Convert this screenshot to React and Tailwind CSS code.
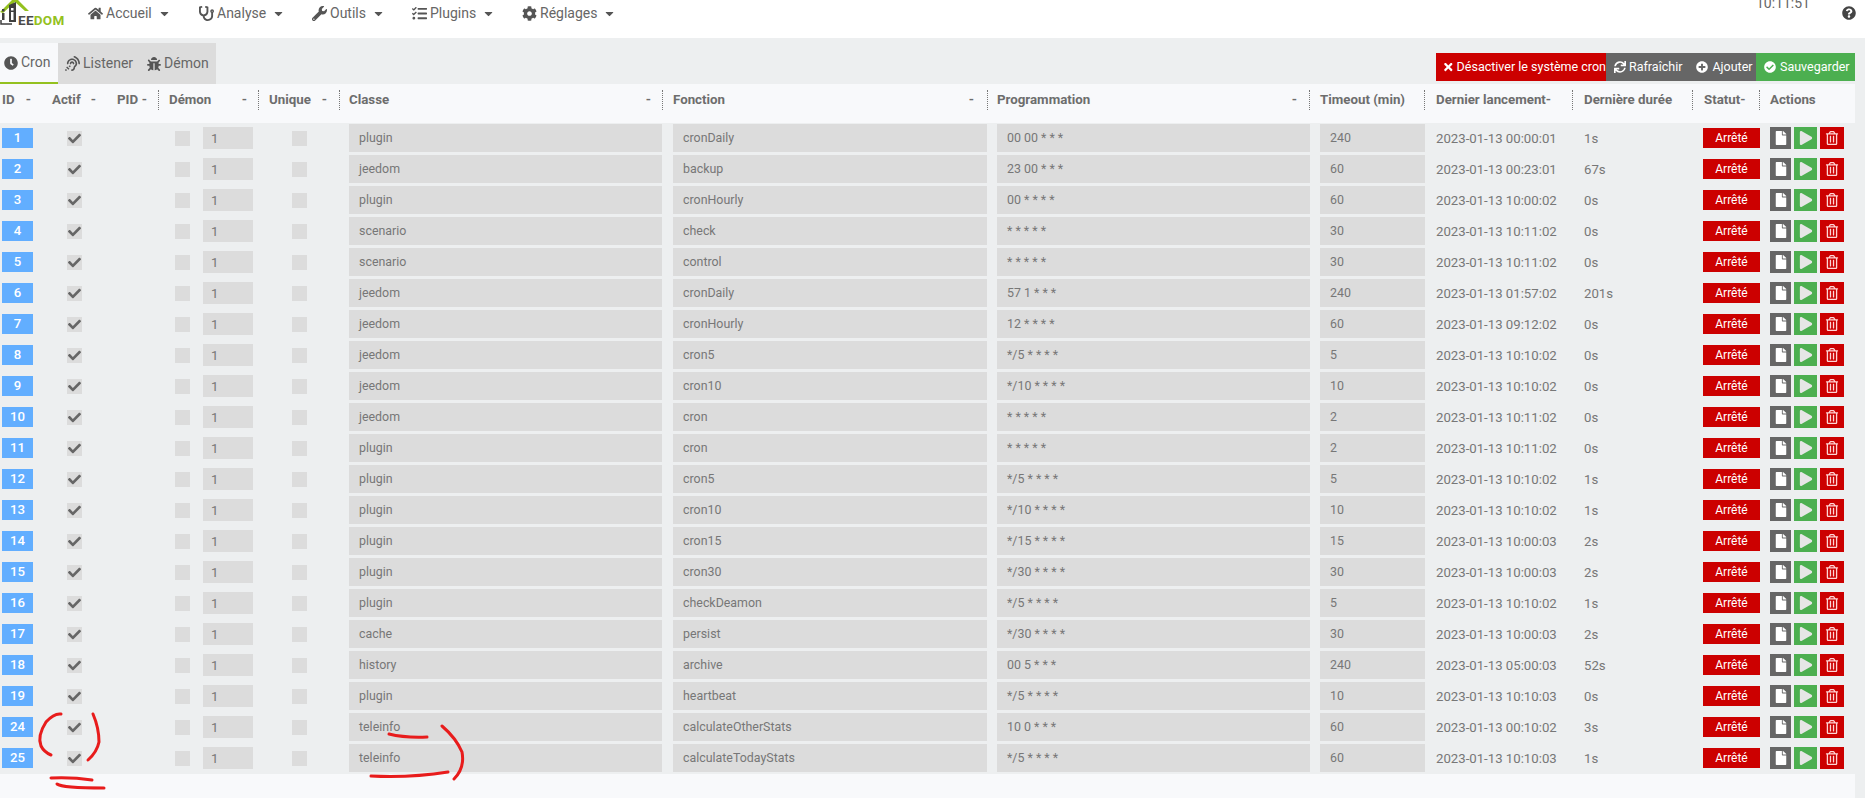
import {
  FaBug, FaCaretDown, FaCheck, FaCheckCircle, FaClock, FaCog, FaHome, FaPlay, FaPlusCircle,
  FaQuestionCircle, FaStethoscope, FaSync, FaTasks, FaTimes, FaWrench, FaFile, FaRegTrashAlt,
  FaAssistiveListeningSystems,
} from 'react-icons/fa'

const rows = [
  [1, 'plugin', 'cronDaily', '00 00 * * *', 240, '2023-01-13 00:00:01', '1s'],
  [2, 'jeedom', 'backup', '23 00 * * *', 60, '2023-01-13 00:23:01', '67s'],
  [3, 'plugin', 'cronHourly', '00 * * * *', 60, '2023-01-13 10:00:02', '0s'],
  [4, 'scenario', 'check', '* * * * *', 30, '2023-01-13 10:11:02', '0s'],
  [5, 'scenario', 'control', '* * * * *', 30, '2023-01-13 10:11:02', '0s'],
  [6, 'jeedom', 'cronDaily', '57 1 * * *', 240, '2023-01-13 01:57:02', '201s'],
  [7, 'jeedom', 'cronHourly', '12 * * * *', 60, '2023-01-13 09:12:02', '0s'],
  [8, 'jeedom', 'cron5', '*/5 * * * *', 5, '2023-01-13 10:10:02', '0s'],
  [9, 'jeedom', 'cron10', '*/10 * * * *', 10, '2023-01-13 10:10:02', '0s'],
  [10, 'jeedom', 'cron', '* * * * *', 2, '2023-01-13 10:11:02', '0s'],
  [11, 'plugin', 'cron', '* * * * *', 2, '2023-01-13 10:11:02', '0s'],
  [12, 'plugin', 'cron5', '*/5 * * * *', 5, '2023-01-13 10:10:02', '1s'],
  [13, 'plugin', 'cron10', '*/10 * * * *', 10, '2023-01-13 10:10:02', '1s'],
  [14, 'plugin', 'cron15', '*/15 * * * *', 15, '2023-01-13 10:00:03', '2s'],
  [15, 'plugin', 'cron30', '*/30 * * * *', 30, '2023-01-13 10:00:03', '2s'],
  [16, 'plugin', 'checkDeamon', '*/5 * * * *', 5, '2023-01-13 10:10:02', '1s'],
  [17, 'cache', 'persist', '*/30 * * * *', 30, '2023-01-13 10:00:03', '2s'],
  [18, 'history', 'archive', '00 5 * * *', 240, '2023-01-13 05:00:03', '52s'],
  [19, 'plugin', 'heartbeat', '*/5 * * * *', 10, '2023-01-13 10:10:03', '0s'],
  [24, 'teleinfo', 'calculateOtherStats', '10 0 * * *', 60, '2023-01-13 00:10:02', '3s'],
  [25, 'teleinfo', 'calculateTodayStats', '*/5 * * * *', 60, '2023-01-13 10:10:03', '1s'],
]

const menu = [
  { label: 'Accueil', icon: FaHome, className: 'w-[111px]' },
  { label: 'Analyse', icon: FaStethoscope, className: 'w-[113px]' },
  { label: 'Outils', icon: FaWrench, className: 'w-[100px]' },
  { label: 'Plugins', icon: FaTasks, className: 'w-[110px]' },
  { label: 'Réglages', icon: FaCog, className: 'w-[110px]' },
]

const columns = 'grid grid-cols-[50px_65px_43px_100px_81px_323px_325px_322px_115px_148px_120px_67px_96px]'

function Logo() {
  return (
    <div className="relative h-[38px] w-[88px] shrink-0 overflow-hidden">
      <svg className="absolute left-0 top-0" width="30" height="26" viewBox="0 0 30 26">
        <path d="M0 12 L13 -1 L17 -1 L29 11 L25 11 L15 2 L3 13 Z" fill="#94c11f" />
        <path d="M9 5 L16 2 V22 H9 Z" fill="#3f3f3f" />
        <rect x="11" y="8" width="2.5" height="2.5" fill="#fff" />
        <rect x="11" y="12" width="2.5" height="8" fill="#fff" />
        <rect x="2" y="9" width="2.5" height="2.5" fill="#3f3f3f" />
        <rect x="2" y="13" width="2.5" height="7" fill="#3f3f3f" />
        <path d="M1 20 V24 H12" fill="none" stroke="#3f3f3f" strokeWidth="1.5" />
      </svg>
      <span className="absolute left-[18px] top-[12px] text-[13.5px] font-bold leading-[16px] tracking-[0.3px] text-[#4a4a4a]">
        EE<span className="text-[#94c11f]">DOM</span>
      </span>
    </div>
  )
}

function Navbar() {
  return (
    <header className="relative flex h-[38px] items-start bg-white text-[14px] text-[#666]">
      <Logo />
      <nav className="flex h-[27px] items-center">
        {menu.map((item) => (
          <div key={item.label} className={`flex items-center ${item.className}`}>
            <item.icon className="mr-[3px] text-[15px] text-[#555]" />
            <span>{item.label}</span>
            <FaCaretDown className="ml-[6px] text-[13px] text-[#555]" />
          </div>
        ))}
      </nav>
      <span className="absolute left-[1756px] top-[-5px] text-[14px] leading-[16px] text-[#666]">10:11:51</span>
      <FaQuestionCircle className="absolute left-[1842px] top-[6px] text-[14px] text-[#444]" />
    </header>
  )
}

function Toolbar() {
  return (
    <div className="flex h-[46px] items-end justify-between pr-[10px]">
      <div className="flex h-[41px] text-[14px] text-[#666]">
        <div className="flex w-[58px] items-center gap-[3px] border-b-2 border-[#94c11f] bg-[#f8f9fb] pl-[4px]">
          <FaClock className="text-[14px] text-[#555]" />
          Cron
        </div>
        <div className="flex w-[158px] items-center bg-[#dcdcdc] pl-[7px]">
          <FaAssistiveListeningSystems className="mr-[3px] text-[15px] text-[#555]" />
          Listener
          <FaBug className="ml-[14px] mr-[3px] text-[14px] text-[#555]" />
          Démon
        </div>
      </div>
      <div className="mb-[3px] flex h-[28px] whitespace-nowrap text-[12.5px] text-white">
        <div className="flex w-[170px] items-center gap-[3px] bg-[#cc0000] pl-[7px]">
          <FaTimes className="text-[12px]" />
          <span>Désactiver le système cron</span>
        </div>
        <div className="flex w-[150px] items-center bg-[#666] pl-[8px]">
          <FaSync className="mr-[3px] text-[12px]" />
          Rafraîchir
          <FaPlusCircle className="ml-[14px] mr-[4px] text-[12px]" />
          Ajouter
        </div>
        <div className="flex w-[99px] items-center gap-[4px] bg-[#4caf50] pl-[8px]">
          <FaCheckCircle className="text-[12px]" />
          Sauvegarder
        </div>
      </div>
    </div>
  )
}

function HeaderCell({ label, sort, divider = true, className = '' }) {
  return (
    <div className={`flex h-[20px] items-center justify-between ${divider ? 'border-l border-dotted border-[#777]' : ''} ${className}`}>
      <span>{label}</span>
      {sort && <span>-</span>}
    </div>
  )
}

function TableHeader() {
  return (
    <div className={`${columns} h-[39px] items-center pb-[7px] text-[13.3px] font-bold text-[#6d6d6d]`}>
      <HeaderCell label="ID" sort divider={false} className="pl-[2px] pr-[19px]" />
      <HeaderCell label="Actif" sort divider={false} className="pl-[2px] pr-[19px]" />
      <HeaderCell label="PID" sort divider={false} className="pl-[2px] pr-[11px]" />
      <HeaderCell label="Démon" sort className="pl-[10px] pr-[11px]" />
      <HeaderCell label="Unique" sort className="pl-[10px] pr-[12px]" />
      <HeaderCell label="Classe" sort className="pl-[9px] pr-[11px]" />
      <HeaderCell label="Fonction" sort className="pl-[10px] pr-[13px]" />
      <HeaderCell label="Programmation" sort className="pl-[9px] pr-[12px]" />
      <HeaderCell label="Timeout (min)" className="pl-[10px]" />
      <HeaderCell label="Dernier lancement-" className="pl-[11px]" />
      <HeaderCell label="Dernière durée" className="pl-[11px]" />
      <HeaderCell label="Statut-" className="pl-[11px]" />
      <HeaderCell label="Actions" className="pl-[10px]" />
    </div>
  )
}

function Checkbox({ checked }) {
  return (
    <span className="flex h-[15px] w-[15px] shrink-0 items-center justify-center bg-[#dcdcdc]">
      {checked && <FaCheck className="text-[13px] text-[#666]" />}
    </span>
  )
}

function Field({ value, className = '' }) {
  return <div className={`flex h-[28px] items-center bg-[#dcdcdc] pl-[10px] pt-[1px] text-[12.4px] ${className}`}>{value}</div>
}

function Row({ row }) {
  const [id, classe, fonction, cron, timeout, last, duration] = row
  return (
    <div className={`${columns} h-[31px] items-center pb-[1px] text-[13.2px] text-[#777]`}>
      <div>
        <span className="ml-[2px] flex h-[20px] w-fit min-w-[31px] items-center justify-center bg-[#62aeff] px-[7px] font-medium text-white">{id}</span>
      </div>
      <div className="pl-[17px]"><Checkbox checked /></div>
      <div />
      <div className="flex items-center pl-[17px]">
        <Checkbox />
        <div className="ml-[13px] flex h-[22px] w-[50px] items-center bg-[#dcdcdc] pl-[8px] pt-[1px]">1</div>
      </div>
      <div className="pl-[34px]"><Checkbox /></div>
      <div className="pl-[10px]"><Field value={classe} /></div>
      <div className="pl-[11px]"><Field value={fonction} /></div>
      <div className="pl-[10px]"><Field value={cron} className="mr-[-1px]" /></div>
      <div className="pl-[11px]"><Field value={timeout} className="mr-[-1px]" /></div>
      <div className="pl-[12px] pt-[1px]">{last}</div>
      <div className="pl-[12px] pt-[1px]">{duration}</div>
      <div className="pl-[11px]">
        <span className="flex h-[20px] w-[57px] items-center justify-center bg-[#cc0000] text-[12px] text-white">Arrêté</span>
      </div>
      <div className="flex items-center pl-[11px] text-white">
        <span className="flex h-[22px] w-[21px] items-center justify-center bg-[#666]"><FaFile className="text-[14px]" /></span>
        <span className="ml-[3px] flex h-[22px] w-[23px] items-center justify-center bg-[#4caf50]"><FaPlay className="text-[14px] text-[#e6e6e6]" /></span>
        <span className="ml-[3px] flex h-[22px] w-[24px] items-center justify-center bg-[#cc0000]"><FaRegTrashAlt className="text-[14px] text-[#ffd5d5]" /></span>
      </div>
    </div>
  )
}

function Annotations() {
  return (
    <svg className="pointer-events-none absolute left-0 top-0" width="1865" height="798" fill="none" stroke="#e81c1c" strokeWidth="3" strokeLinecap="round">
      <path d="M61 714 Q54 713 46 722 Q37 736 41 746 Q44 752 51 755" />
      <path d="M93 714 Q99 728 99 742 Q97 752 88 760" />
      <path d="M51 778 Q72 777 92 780" />
      <path d="M57 784 Q62 788 104 788" />
      <path d="M389 734 Q405 738 427 737" />
      <path d="M371 776 Q410 778 448 772" />
      <path d="M442 726 Q456 738 462 752 Q465 768 454 779" />
    </svg>
  )
}

export default function App() {
  return (
    <div className="relative h-[798px] w-[1865px] overflow-hidden bg-[#edeff0] font-['Roboto',sans-serif]">
      <Navbar />
      <Toolbar />
      <main className="w-[1855px] bg-[#f8f9fb] pb-[24px]">
        <TableHeader />
        <div className="bg-[#edeff0]">
          {rows.map((row) => <Row key={row[0]} row={row} />)}
        </div>
      </main>
      <Annotations />
    </div>
  )
}
